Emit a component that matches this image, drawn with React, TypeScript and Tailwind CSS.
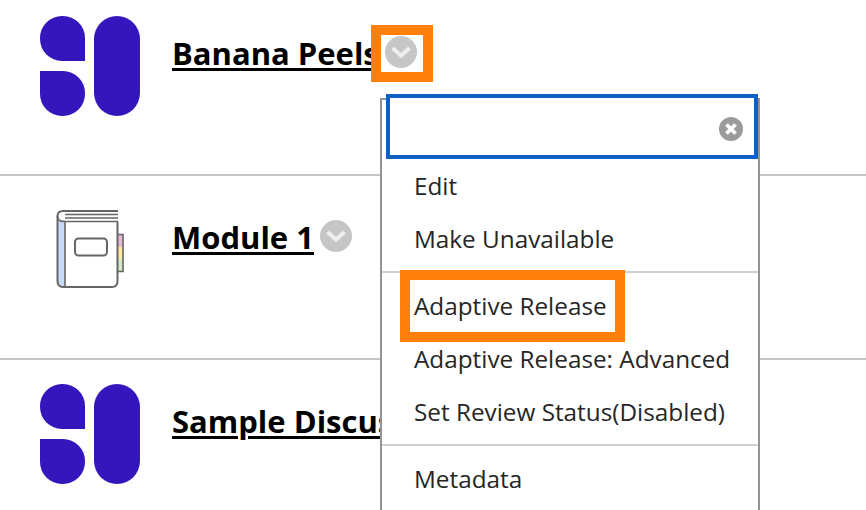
import React from "react"

const Blob = () => (
    <svg width="100" height="100" viewBox="0 0 100 100" className="shrink-0">
        <path d="M22 0 H23 A22 22 0 0 1 45 22 V45 H22 A22 22 0 0 1 0 23 V22 A22 22 0 0 1 22 0 Z" fill="#3516bd" />
        <path d="M0 55 H23 A22 22 0 0 1 45 77 V78 A22 22 0 0 1 23 100 H22 A22 22 0 0 1 0 78 Z" fill="#3516bd" />
        <rect x="54" y="0" width="46" height="100" rx="23" fill="#3516bd" />
    </svg>
)

const Book = () => (
    <svg width="100" height="100" viewBox="0 0 100 100" className="shrink-0">
        <rect x="78" y="35" width="5" height="12" fill="#e5b8d6" />
        <rect x="78" y="47" width="5" height="12" fill="#fde9a0" />
        <rect x="78" y="59" width="5" height="12" fill="#d5e8c4" />
        <path d="M78 34.5 H83 V71.5 H78" fill="none" stroke="#666" strokeWidth="1.6" />
        <path d="M18 20 H25 V87 H23 Q18 87 18 82 Z" fill="#c6dbfb" />
        <path d="M78 11 H23 Q17.5 11 17.5 16 V81 Q17.5 87 23 87 H72 Q77.5 87 77.5 81 V22" fill="none" stroke="#666" strokeWidth="2" />
        <path d="M78 14.5 H25 M78 18 H25 M78 21.5 H24 Q17.5 21.5 17.5 16 M25 21.5 V87" fill="none" stroke="#666" strokeWidth="1.6" />
        <rect x="35" y="38.5" width="32" height="17" rx="3.5" fill="#fff" stroke="#666" strokeWidth="2" />
    </svg>
)

const Chevron = () => (
    <svg width="32" height="32" viewBox="0 0 32 32" className="shrink-0">
        <circle cx="16" cy="16" r="16" fill="#c6c6c6" />
        <path d="M7.5 12 L16 19.5 L24.5 12" fill="none" stroke="#eeeeee" strokeWidth="4" />
    </svg>
)

const Row = ({ icon, title, menu, highlight }: { icon: React.ReactNode, title: string, menu?: boolean, highlight?: boolean }) => {
    return (
        <div className="h-[184px] border-b-2 border-[#c4c4c4] pt-6 pl-10 flex items-start gap-8">
            {icon}
            <div className="flex items-center gap-1.5 mt-[19px]">
                <a className="text-[31px] leading-[36px] font-bold text-black underline decoration-[3px] underline-offset-[3px] whitespace-nowrap">
                    {title}
                </a>
                {menu && (
                    <span className={highlight ? "relative bg-white -mt-[3px]" : "relative -mt-[2px]"}>
                        {highlight && <span className="absolute -left-[14px] -top-[11px] w-[62px] h-[57px] border-[10px] border-[#ff7f0a]"></span>}
                        <Chevron />
                    </span>
                )}
            </div>
        </div>
    )
}

const Item = ({ label }: { label: string }) => (
    <div className="h-[53px] flex items-center pl-[32px] text-[24.3px] text-[#262626] whitespace-nowrap">
        {label}
    </div>
)

export default function App() {
    return (
        <div className="relative h-[510px] w-[866px] overflow-hidden bg-white font-['Open_Sans',sans-serif]">
            <div className="-mt-2">
                <Row icon={<Blob />} title="Banana Peels" menu highlight />
                <Row icon={<Book />} title="Module 1" menu />
                <Row icon={<Blob />} title="Sample Discussion" />
            </div>

            <div className="absolute left-[380px] top-[98px] w-[380px] h-[440px] bg-white border-2 border-[#949494]">
                <div className="-mt-[6px] ml-[4px] h-[65px] border-4 border-[#0f5fc7] bg-white flex items-center justify-end pr-[11px] pt-[5px]">
                    <svg width="24" height="24" viewBox="0 0 24 24">
                        <circle cx="12" cy="12" r="12" fill="#9b9b9b" />
                        <path d="M7.5 7.5 L16.5 16.5 M16.5 7.5 L7.5 16.5" stroke="#fff" strokeWidth="3.8" />
                    </svg>
                </div>
                <div className="pt-[1px]">
                    <Item label="Edit" />
                    <Item label="Make Unavailable" />
                </div>
                <div className="h-[2px] bg-[#d0d0d0] mt-[5px]"></div>
                <div className="relative pt-[7px]">
                    <div className="absolute left-[18px] -top-[3px] w-[225px] h-[72px] border-[10px] border-[#ff7f0a]"></div>
                    <Item label="Adaptive Release" />
                    <Item label="Adaptive Release: Advanced" />
                    <Item label="Set Review Status(Disabled)" />
                </div>
                <div className="h-[2px] bg-[#d0d0d0] mt-[5px]"></div>
                <div className="pt-[7px]">
                    <Item label="Metadata" />
                </div>
            </div>
        </div>
    )
}
